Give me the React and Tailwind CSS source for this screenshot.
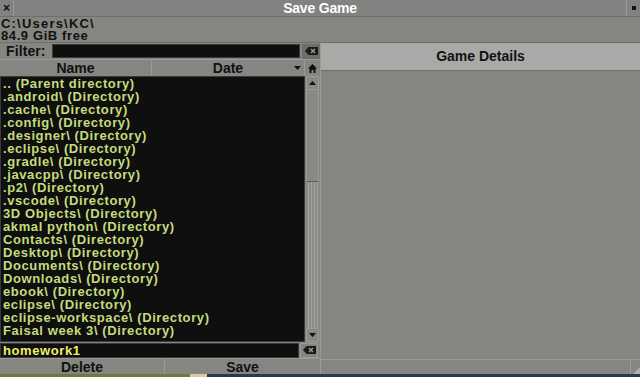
import React from "react";

const items = [
  ".. (Parent directory)",
  ".android\\ (Directory)",
  ".cache\\ (Directory)",
  ".config\\ (Directory)",
  ".designer\\ (Directory)",
  ".eclipse\\ (Directory)",
  ".gradle\\ (Directory)",
  ".javacpp\\ (Directory)",
  ".p2\\ (Directory)",
  ".vscode\\ (Directory)",
  "3D Objects\\ (Directory)",
  "akmal python\\ (Directory)",
  "Contacts\\ (Directory)",
  "Desktop\\ (Directory)",
  "Documents\\ (Directory)",
  "Downloads\\ (Directory)",
  "ebook\\ (Directory)",
  "eclipse\\ (Directory)",
  "eclipse-workspace\\ (Directory)",
  "Faisal week 3\\ (Directory)",
];

function ClearIcon() {
  return (
    <svg width="13" height="8" viewBox="0 0 13 8">
      <path d="M0 4 L3.5 0 H13 V8 H3.5 Z" fill="#1a1a1a" />
      <path d="M6 2 L10 6 M10 2 L6 6" stroke="#9a9a97" strokeWidth="1.4" />
    </svg>
  );
}

export default function App() {
  return (
    <div
      className="w-[640px] h-[377px] overflow-hidden flex flex-col bg-[#858582] text-[#111]"
      style={{ fontFamily: '"Liberation Sans", Arial, sans-serif' }}
    >
      {/* Title bar */}
      <div className="h-[17px] flex border-b border-[#6e6e6b] bg-[#828280]">
        <div className="w-[14px] flex items-center justify-center text-[12px] font-bold border-r border-[#9a9a97] leading-none">
          ×
        </div>
        <div className="flex-1 flex items-center justify-center text-white font-bold text-[14px] leading-none border-r border-[#9a9a97] tracking-[-0.2px]">
          Save Game
        </div>
        <div className="w-[13px] flex items-center justify-center">
          <div className="w-[4px] h-[4px] bg-[#111]" />
        </div>
      </div>
      {/* Path */}
      <div className="h-[26px] px-[1px] text-[13px] font-bold leading-[12px] border-b border-[#6e6e6b] tracking-[0.6px]">
        <div className="h-[12px] pt-[1px] tracking-[1.2px]">C:\Users\KC\</div>
        <div className="h-[12px] pt-[1px]">84.9 GiB free</div>
      </div>
      {/* Body */}
      <div className="flex-1 flex">
        {/* Left */}
        <div className="w-[321px] flex flex-col border-r border-[#9a9a97]">
          {/* Filter */}
          <div className="h-[16px] flex items-center">
            <div className="w-[52px] pl-[6px] text-[14px] font-bold leading-none tracking-[0.1px]">
              Filter:
            </div>
            <div className="w-[248px] h-[14px] bg-[#0f0f0f] border border-[#3a3a3a]" />
            <div className="ml-[2px] w-[18px] h-[15px] bg-[#6d6d6b] flex items-center justify-center">
              <ClearIcon />
            </div>
          </div>
          {/* Header */}
          <div className="h-[17px] flex border-t border-[#9a9a97]">
            <div className="w-[152px] flex items-center justify-center text-[14px] font-bold border-r border-[#9a9a97]">
              Name
            </div>
            <div className="w-[153px] relative flex items-center justify-center text-[14px] font-bold border-r border-[#9a9a97]">
              Date
              <svg className="absolute right-[3px] top-[6px]" width="7" height="4" viewBox="0 0 7 4">
                <path d="M0 0 H7 L3.5 4 Z" fill="#111" />
              </svg>
            </div>
            <div className="flex-1 flex items-center justify-center">
              <svg width="9" height="9" viewBox="0 0 9 9">
                <path d="M4.5 0 L9 4.5 H7.5 V9 H5.5 V6 H3.5 V9 H1.5 V4.5 H0 Z" fill="#111" />
              </svg>
            </div>
          </div>
          {/* List + scrollbar */}
          <div className="h-[266px] flex">
            <div className="w-[305px] bg-[#0f0f0f] border border-[#3a3a3a] pl-[2px] overflow-hidden">
              {items.map((t) => (
                <div
                  key={t}
                  className="h-[13px] leading-[13px] text-[13px] font-bold text-[#c4dc7c] whitespace-nowrap tracking-[0.6px]"
                >
                  {t}
                </div>
              ))}
            </div>
            <div className="flex-1 flex flex-col pl-[1px] pr-[1px]">
              <div className="h-[14px] flex items-center justify-center border border-[#9a9a97] bg-[#888885]">
                <svg width="7" height="4" viewBox="0 0 7 4">
                  <path d="M0 4 H7 L3.5 0 Z" fill="#111" />
                </svg>
              </div>
              <div className="h-[92px] border-x border-[#9a9a97] border-b border-b-[#5e5e5b] bg-[#898986]" />
              <div className="flex-1 flex justify-center gap-[2px] bg-[#8a8a87]">
                <div className="w-[1px] bg-[#a3a3a0]" />
                <div className="w-[1px] bg-[#a3a3a0]" />
                <div className="w-[1px] bg-[#a3a3a0]" />
                <div className="w-[1px] bg-[#a3a3a0]" />
              </div>
              <div className="h-[14px] flex items-center justify-center border border-[#9a9a97] bg-[#888885]">
                <svg width="7" height="4" viewBox="0 0 7 4">
                  <path d="M0 0 H7 L3.5 4 Z" fill="#111" />
                </svg>
              </div>
            </div>
          </div>
          {/* Filename */}
          <div className="h-[16px] flex items-center">
            <div className="w-[299px] h-[15px] bg-[#0f0f0f] border border-[#3a3a3a] pl-[2px] text-[13px] font-bold leading-[13px] text-[#eef06a] tracking-[0.6px]">
              homework1
            </div>
            <div className="ml-[1px] w-[18px] h-[15px] border border-[#9a9a97] flex items-center justify-center">
              <ClearIcon />
            </div>
          </div>
          {/* Buttons */}
          <div className="flex-1 flex border-t border-[#9a9a97]">
            <div className="w-[165px] flex items-center justify-center text-[14px] font-bold border-r border-[#9a9a97] leading-none">
              Delete
            </div>
            <div className="flex-1 flex items-center justify-center text-[14px] font-bold leading-none">
              Save
            </div>
          </div>
        </div>
        {/* Right */}
        <div className="flex-1 flex flex-col">
          <div className="h-[28px] bg-[#a9a9a7] flex items-center justify-center text-[14px] font-bold border-b border-[#6e6e6b]">
            Game Details
          </div>
          <div className="flex-1" />
          <div className="h-[15px] border-t border-[#9a9a97] flex justify-end">
            <div className="w-[10px] border-l border-[#9a9a97] flex items-end justify-end">
              <svg width="7" height="7" viewBox="0 0 7 7">
                <path d="M7 0 V7 H0 Z" fill="#b0b0ad" />
              </svg>
            </div>
          </div>
        </div>
      </div>
      {/* Bottom strip (background behind) */}
      <div className="h-[3px] flex">
        <div className="w-[190px] bg-[#6d7a3c]" />
        <div className="w-[17px] bg-[#d8c9a0]" />
        <div className="flex-1 bg-[#2c3850]" />
      </div>
    </div>
  );
}
